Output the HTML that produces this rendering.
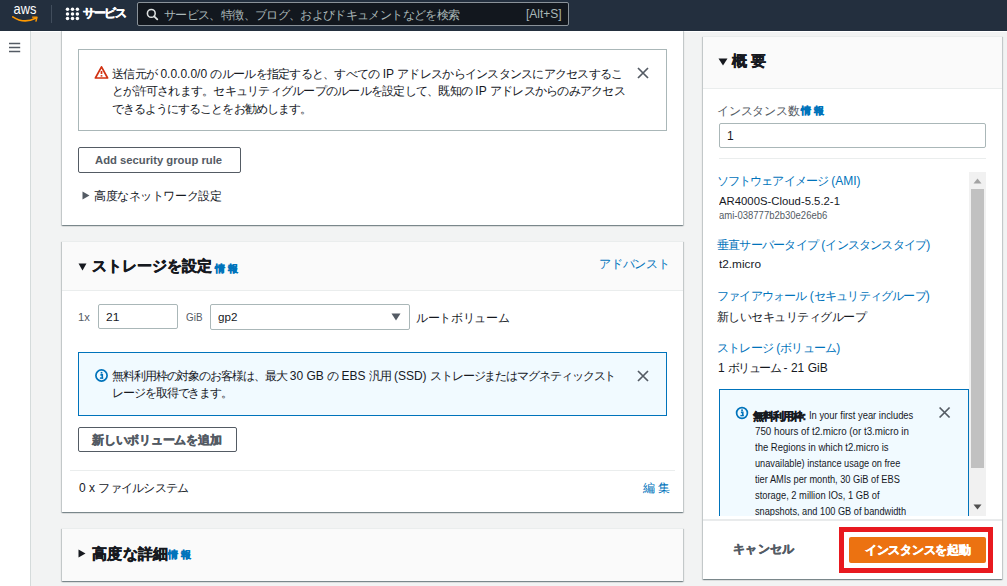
<!DOCTYPE html>
<html><head><meta charset="utf-8">
<style>
*{box-sizing:border-box;margin:0;padding:0}
html,body{width:1007px;height:586px;overflow:hidden;background:#f2f3f3;font-family:"Liberation Sans",sans-serif;color:#16191f;font-size:12px}
.a{position:absolute}
.t{position:absolute;white-space:nowrap}
.t i{display:inline-block;width:var(--w);text-align:center;font-style:normal}
.card{position:absolute;background:#fff;border-top:1px solid #eaeded;box-shadow:0 1px 1px 0 rgba(0,28,36,.3),1px 1px 1px 0 rgba(0,28,36,.15),-1px 1px 1px 0 rgba(0,28,36,.15)}
.hdr{position:absolute;background:#fafafa;border-bottom:1px solid #eaeded}
.btn{position:absolute;border:1px solid #545b64;background:#fff;border-radius:2px}
.inp{position:absolute;background:#fff;border:1px solid #aab7b8;border-radius:2px}
.alert{position:absolute;border:1px solid #aab7b8;background:#fff}
.ialert{position:absolute;border:1px solid #0073bb;background:#f1faff}
.line{position:absolute;height:1px;background:#eaeded}
svg{position:absolute}
</style></head><body>

<div class="a" style="left:0;top:31px;width:1007px;height:1px;background:#fff"></div>
<!-- sidebar -->
<div class="a" style="left:0;top:30px;width:31px;height:556px;background:#fff;border-right:1px solid #d5dbdb"></div>
<svg style="left:8px;top:41px" width="14" height="13" viewBox="0 0 14 13"><path d="M1 2.6 H12.2 M1 6.5 H12.2 M1 10.6 H12.2" stroke="#545b64" stroke-width="1.5"/></svg>

<!-- card 1 -->
<div class="card" style="left:62px;top:-10px;width:621px;height:235px"></div>
<div class="alert" style="left:78px;top:49px;width:589px;height:82px"></div>
<svg style="left:94px;top:65px" width="15" height="15" viewBox="0 0 15 15"><path d="M7.5 1.8 L13.6 13 L1.4 13 Z" stroke="#d13212" stroke-width="1.7" fill="none" stroke-linejoin="round"/><path d="M7.5 6 V9" stroke="#d13212" stroke-width="1.7"/><rect x="6.65" y="10.1" width="1.7" height="1.5" fill="#d13212"/></svg>
<svg style="left:636px;top:66px" width="14" height="14" viewBox="0 0 14 14"><path d="M2 2 L12 12 M12 2 L2 12" stroke="#545b64" stroke-width="1.7"/></svg>
<div class="btn" style="left:78px;top:147px;width:163px;height:26px"></div>
<svg style="left:82px;top:191px" width="8" height="9" viewBox="0 0 8 9"><path d="M0.5 0.5 L7.5 4.5 L0.5 8.5 Z" fill="#545b64"/></svg>

<!-- card 2 -->
<div class="card" style="left:62px;top:241px;width:621px;height:271px"></div>
<div class="hdr" style="left:62px;top:242px;width:621px;height:49px"></div>
<svg style="left:78px;top:263px" width="9" height="8" viewBox="0 0 9 8"><path d="M0.5 0.5 L8.5 0.5 L4.5 7.5 Z" fill="#16191f"/></svg>
<div class="inp" style="left:98px;top:304px;width:80px;height:25px"></div>
<div class="inp" style="left:210px;top:304px;width:200px;height:26px"></div>
<svg style="left:391px;top:313px" width="10" height="8" viewBox="0 0 10 8"><path d="M0.5 0.5 L9.5 0.5 L5 7.5 Z" fill="#545b64"/></svg>
<div class="ialert" style="left:78px;top:352px;width:589px;height:64px"></div>
<svg style="left:94px;top:368px" width="15" height="15" viewBox="0 0 15 15"><circle cx="7.5" cy="7.5" r="5.6" stroke="#0073bb" stroke-width="1.7" fill="none"/><path d="M6.4 6.9 H8.3 V10.4" stroke="#0073bb" stroke-width="1.6" fill="none"/><rect x="5.9" y="9.4" width="3.3" height="1.4" fill="#0073bb"/><rect x="6.7" y="3.9" width="1.7" height="1.7" fill="#0073bb"/></svg>
<svg style="left:636px;top:369px" width="14" height="14" viewBox="0 0 14 14"><path d="M2 2 L12 12 M12 2 L2 12" stroke="#545b64" stroke-width="1.7"/></svg>
<div class="btn" style="left:78px;top:427px;width:159px;height:25px"></div>
<div class="line" style="left:70px;top:470px;width:605px"></div>

<!-- card 3 -->
<div class="card" style="left:62px;top:528px;width:621px;height:53px;background:#fafafa"></div>
<svg style="left:78px;top:549px" width="8" height="9" viewBox="0 0 8 9"><path d="M0.5 0.5 L7.5 4.5 L0.5 8.5 Z" fill="#16191f"/></svg>

<!-- right panel -->
<div class="card" style="left:703px;top:36px;width:299px;height:543px"></div>
<div class="hdr" style="left:703px;top:37px;width:299px;height:52px"></div>
<svg style="left:718px;top:58px" width="10" height="8" viewBox="0 0 10 8"><path d="M0.5 0.5 L9.5 0.5 L5 7.5 Z" fill="#16191f"/></svg>
<div class="inp" style="left:719px;top:123px;width:267px;height:25px"></div>
<div class="line" style="left:719px;top:158px;width:267px"></div>

<div class="a" style="left:0;top:0;width:1007px;height:586px;clip-path:inset(159px 0 70px 0)">
<div class="ialert" style="left:719px;top:389px;width:250px;height:160px"></div>
<svg style="left:735px;top:406px" width="14" height="14" viewBox="0 0 14 14"><circle cx="7" cy="7" r="5.4" stroke="#0073bb" stroke-width="1.7" fill="none"/><path d="M5.9 6.4 H7.8 V9.9" stroke="#0073bb" stroke-width="1.6" fill="none"/><rect x="5.4" y="8.9" width="3.3" height="1.4" fill="#0073bb"/><rect x="6.2" y="3.4" width="1.7" height="1.7" fill="#0073bb"/></svg>
<svg style="left:937px;top:405px" width="14" height="14" viewBox="0 0 14 14"><path d="M2.6 2.5 L12.6 12.5 M12.6 2.5 L2.6 12.5" stroke="#545b64" stroke-width="1.7"/></svg>
<div class="t" style="left:753.00px;top:407.50px;font-size:11px;line-height:17px;font-weight:bold;-webkit-text-stroke:0.45px #16191f;color:#16191f;--w:9.89px"><i>無</i><i>料</i><i>利</i><i>用</i><i>枠</i>:</div>
<div class="t" style="left:809.07px;top:408.10px;font-size:10px;line-height:16px;color:#16191f;transform:scaleX(0.9380);transform-origin:0 0">In your first year includes</div>
<div class="t" style="left:754.99px;top:424.10px;font-size:10px;line-height:16px;color:#16191f;transform:scaleX(0.9753);transform-origin:0 0">750 hours of t2.micro (or t3.micro in</div>
<div class="t" style="left:754.96px;top:440.10px;font-size:10px;line-height:16px;color:#16191f;transform:scaleX(0.9501);transform-origin:0 0">the Regions in which t2.micro is</div>
<div class="t" style="left:754.95px;top:456.10px;font-size:10px;line-height:16px;color:#16191f;transform:scaleX(0.9207);transform-origin:0 0">unavailable) instance usage on free</div>
<div class="t" style="left:754.95px;top:472.10px;font-size:10px;line-height:16px;color:#16191f;transform:scaleX(0.9238);transform-origin:0 0">tier AMIs per month, 30 GiB of EBS</div>
<div class="t" style="left:754.95px;top:488.00px;font-size:10px;line-height:16px;color:#16191f;transform:scaleX(0.9336);transform-origin:0 0">storage, 2 million IOs, 1 GB of</div>
<div class="t" style="left:754.95px;top:504.00px;font-size:10px;line-height:16px;color:#16191f;transform:scaleX(0.9210);transform-origin:0 0">snapshots, and 100 GB of bandwidth</div>
</div>
<!-- scrollbar -->
<div class="a" style="left:969px;top:172px;width:17px;height:344px;background:#f1f1f1"></div>
<div class="a" style="left:971px;top:189px;width:13px;height:279px;background:#c1c1c1"></div>
<svg style="left:973px;top:178px" width="9" height="6" viewBox="0 0 9 6"><path d="M0.5 5.5 L8.5 5.5 L4.5 0.5 Z" fill="#a3a3a3"/></svg>
<svg style="left:973px;top:504px" width="9" height="6" viewBox="0 0 9 6"><path d="M0.5 0.5 L8.5 0.5 L4.5 5.5 Z" fill="#505050"/></svg>
<!-- footer -->
<div class="line" style="left:703px;top:519px;width:299px;height:2px;background:#e9ebec"></div>
<div class="a" style="left:839px;top:527px;width:154px;height:46px;border:5px solid #e8191f"></div>
<div class="a" style="left:849px;top:537px;width:137px;height:26px;background:#ec7211;border-radius:2px"></div>

<!-- nav -->
<div class="a" style="left:0;top:0;width:1007px;height:31px;background:#232f3e"></div>
<svg style="left:12px;top:4px" width="28" height="20" viewBox="0 0 28 20"><text x="1.6" y="9.9" font-family="Liberation Sans" font-size="14.8" fill="#fff" textLength="22.8" lengthAdjust="spacingAndGlyphs">aws</text><path d="M0.8 12.9 Q12 20.2 23.5 14.3" stroke="#f90" stroke-width="1.7" fill="none" stroke-linecap="round"/><path d="M20.6 13.1 L25 13.3 L24 17.1" stroke="#f90" stroke-width="1.4" fill="none" stroke-linecap="round" stroke-linejoin="round"/></svg>
<div class="a" style="left:51px;top:5px;width:1px;height:18px;background:#414d5c"></div>
<svg style="left:65px;top:7px" width="15" height="14" viewBox="0 0 15 14"><g fill="#fff"><circle cx="2.5" cy="2.3" r="1.75"/><circle cx="7.5" cy="2.3" r="1.75"/><circle cx="12.4" cy="2.3" r="1.75"/><circle cx="2.5" cy="6.9" r="1.75"/><circle cx="7.5" cy="6.9" r="1.75"/><circle cx="12.4" cy="6.9" r="1.75"/><circle cx="2.5" cy="11.5" r="1.75"/><circle cx="7.5" cy="11.5" r="1.75"/><circle cx="12.4" cy="11.5" r="1.75"/></g></svg>
<div class="a" style="left:137px;top:2px;width:432px;height:24px;background:#12171e;border:1px solid #8a9299;border-radius:2px"></div>
<svg style="left:146px;top:8px" width="13" height="13" viewBox="0 0 13 13"><circle cx="5.3" cy="5.4" r="3.9" stroke="#dfe3e3" stroke-width="1.55" fill="none"/><path d="M8.2 8.3 L11.3 11.4" stroke="#dfe3e3" stroke-width="1.8" stroke-linecap="round"/></svg>

<div class="t" style="left:83.00px;top:3.50px;font-size:12px;line-height:18px;font-weight:bold;-webkit-text-stroke:0.45px #fff;color:#fff;--w:10.70px"><i>サ</i><i>ー</i><i>ビ</i><i>ス</i></div>
<div class="t" style="left:164.00px;top:5.50px;font-size:12px;line-height:18px;color:#aab7b8;--w:11.37px"><i>サ</i><i>ー</i><i>ビ</i><i>ス</i><i>、</i><i>特</i><i>徴</i><i>、</i><i>ブ</i><i>ロ</i><i>グ</i><i>、</i><i>お</i><i>よ</i><i>び</i><i>ド</i><i>キ</i><i>ュ</i><i>メ</i><i>ン</i><i>ト</i><i>な</i><i>ど</i><i>を</i><i>検</i><i>索</i></div>
<div class="t" style="left:526.00px;top:4.50px;font-size:12px;line-height:18px;color:#aab7b8">[Alt+S]</div>
<div class="t" style="left:112.00px;top:64.50px;font-size:12px;line-height:18px;color:#16191f;--w:11.27px"><i>送</i><i>信</i><i>元</i><i>が</i> 0.0.0.0/0 <i>の</i><i>ル</i><i>ー</i><i>ル</i><i>を</i><i>指</i><i>定</i><i>す</i><i>る</i><i>と</i><i>、</i><i>す</i><i>べ</i><i>て</i><i>の</i> IP <i>ア</i><i>ド</i><i>レ</i><i>ス</i><i>か</i><i>ら</i><i>イ</i><i>ン</i><i>ス</i><i>タ</i><i>ン</i><i>ス</i><i>に</i><i>ア</i><i>ク</i><i>セ</i><i>ス</i><i>す</i><i>る</i><i>こ</i></div>
<div class="t" style="left:112.00px;top:81.50px;font-size:12px;line-height:18px;color:#16191f;--w:11.25px"><i>と</i><i>が</i><i>許</i><i>可</i><i>さ</i><i>れ</i><i>ま</i><i>す</i><i>。</i><i>セ</i><i>キ</i><i>ュ</i><i>リ</i><i>テ</i><i>ィ</i><i>グ</i><i>ル</i><i>ー</i><i>プ</i><i>の</i><i>ル</i><i>ー</i><i>ル</i><i>を</i><i>設</i><i>定</i><i>し</i><i>て</i><i>、</i><i>既</i><i>知</i><i>の</i> IP <i>ア</i><i>ド</i><i>レ</i><i>ス</i><i>か</i><i>ら</i><i>の</i><i>み</i><i>ア</i><i>ク</i><i>セ</i><i>ス</i></div>
<div class="t" style="left:112.00px;top:99.50px;font-size:12px;line-height:18px;color:#16191f;--w:11.05px"><i>で</i><i>き</i><i>る</i><i>よ</i><i>う</i><i>に</i><i>す</i><i>る</i><i>こ</i><i>と</i><i>を</i><i>お</i><i>勧</i><i>め</i><i>し</i><i>ま</i><i>す</i><i>。</i></div>
<div class="t" style="left:95.00px;top:151.50px;font-size:11px;line-height:17px;font-weight:bold;color:#545b64;transform:scaleX(1.0240);transform-origin:0 0">Add security group rule</div>
<div class="t" style="left:94.00px;top:186.50px;font-size:12px;line-height:18px;color:#16191f;--w:11.59px"><i>高</i><i>度</i><i>な</i><i>ネ</i><i>ッ</i><i>ト</i><i>ワ</i><i>ー</i><i>ク</i><i>設</i><i>定</i></div>
<div class="t" style="left:92.00px;top:255.00px;font-size:15px;line-height:21px;font-weight:bold;-webkit-text-stroke:0.45px #16191f;color:#16191f;--w:15.00px"><i>ス</i><i>ト</i><i>レ</i><i>ー</i><i>ジ</i><i>を</i><i>設</i><i>定</i></div>
<div class="t" style="left:214.00px;top:260.50px;font-size:10px;line-height:16px;font-weight:bold;-webkit-text-stroke:0.45px #0073bb;color:#0073bb;--w:12.50px"><i>情</i><i>報</i></div>
<div class="t" style="left:599.00px;top:254.50px;font-size:12px;line-height:18px;color:#0073bb;--w:11.80px"><i>ア</i><i>ド</i><i>バ</i><i>ン</i><i>ス</i><i>ト</i></div>
<div class="t" style="left:78.00px;top:308.50px;font-size:11px;line-height:17px;color:#545b64;transform:scaleX(1.0167);transform-origin:0 0">1x</div>
<div class="t" style="left:106.00px;top:308.50px;font-size:11px;line-height:17px;color:#16191f;transform:scaleX(1.0898);transform-origin:0 0">21</div>
<div class="t" style="left:185.93px;top:308.50px;font-size:11px;line-height:17px;color:#545b64;transform:scaleX(0.8989);transform-origin:0 0">GiB</div>
<div class="t" style="left:218.00px;top:308.50px;font-size:11px;line-height:17px;color:#16191f;transform:scaleX(1.0556);transform-origin:0 0">gp2</div>
<div class="t" style="left:416.00px;top:308.50px;font-size:12px;line-height:18px;color:#16191f;--w:11.70px"><i>ル</i><i>ー</i><i>ト</i><i>ボ</i><i>リ</i><i>ュ</i><i>ー</i><i>ム</i></div>
<div class="t" style="left:112.00px;top:366.50px;font-size:12px;line-height:18px;color:#16191f;--w:10.91px"><i>無</i><i>料</i><i>利</i><i>用</i><i>枠</i><i>の</i><i>対</i><i>象</i><i>の</i><i>お</i><i>客</i><i>様</i><i>は</i><i>、</i><i>最</i><i>大</i> 30 GB <i>の</i> EBS <i>汎</i><i>用</i> (SSD) <i>ス</i><i>ト</i><i>レ</i><i>ー</i><i>ジ</i><i>ま</i><i>た</i><i>は</i><i>マ</i><i>グ</i><i>ネ</i><i>テ</i><i>ィ</i><i>ッ</i><i>ク</i><i>ス</i><i>ト</i></div>
<div class="t" style="left:112.00px;top:383.50px;font-size:12px;line-height:18px;color:#16191f;--w:10.93px"><i>レ</i><i>ー</i><i>ジ</i><i>を</i><i>取</i><i>得</i><i>で</i><i>き</i><i>ま</i><i>す</i><i>。</i></div>
<div class="t" style="left:92.00px;top:430.50px;font-size:12px;line-height:18px;font-weight:bold;-webkit-text-stroke:0.45px #545b64;color:#545b64;--w:11.79px"><i>新</i><i>し</i><i>い</i><i>ボ</i><i>リ</i><i>ュ</i><i>ー</i><i>ム</i><i>を</i><i>追</i><i>加</i></div>
<div class="t" style="left:79.00px;top:478.50px;font-size:12px;line-height:18px;color:#16191f;--w:11.26px">0 x <i>フ</i><i>ァ</i><i>イ</i><i>ル</i><i>シ</i><i>ス</i><i>テ</i><i>ム</i></div>
<div class="t" style="left:642.00px;top:478.50px;font-size:12px;line-height:18px;color:#0073bb;--w:14.45px"><i>編</i><i>集</i></div>
<div class="t" style="left:92.00px;top:542.50px;font-size:15px;line-height:21px;font-weight:bold;-webkit-text-stroke:0.45px #16191f;color:#16191f;--w:15.29px"><i>高</i><i>度</i><i>な</i><i>詳</i><i>細</i></div>
<div class="t" style="left:167.00px;top:547.00px;font-size:10px;line-height:16px;font-weight:bold;-webkit-text-stroke:0.45px #0073bb;color:#0073bb;--w:12.50px"><i>情</i><i>報</i></div>
<div class="t" style="left:730.00px;top:50.00px;font-size:15px;line-height:21px;font-weight:bold;-webkit-text-stroke:0.45px #16191f;color:#16191f;--w:19.05px"><i>概</i><i>要</i></div>
<div class="t" style="left:717.00px;top:101.50px;font-size:12px;line-height:18px;color:#545b64;--w:11.77px"><i>イ</i><i>ン</i><i>ス</i><i>タ</i><i>ン</i><i>ス</i><i>数</i></div>
<div class="t" style="left:800.00px;top:102.50px;font-size:10px;line-height:16px;font-weight:bold;-webkit-text-stroke:0.45px #0073bb;color:#0073bb;--w:12.50px"><i>情</i><i>報</i></div>
<div class="t" style="left:727.00px;top:126.50px;font-size:12px;line-height:18px;color:#16191f">1</div>
<div class="t" style="left:717.00px;top:171.50px;font-size:12px;line-height:18px;color:#0073bb;--w:11.10px"><i>ソ</i><i>フ</i><i>ト</i><i>ウ</i><i>ェ</i><i>ア</i><i>イ</i><i>メ</i><i>ー</i><i>ジ</i> (AMI)</div>
<div class="t" style="left:719.00px;top:192.50px;font-size:11px;line-height:17px;color:#16191f;transform:scaleX(1.0301);transform-origin:0 0">AR4000S-Cloud-5.5.2-1</div>
<div class="t" style="left:719.00px;top:207.50px;font-size:10px;line-height:16px;color:#545b64;transform:scaleX(0.9500);transform-origin:0 0">ami-038777b2b30e26eb6</div>
<div class="t" style="left:717.00px;top:235.50px;font-size:12px;line-height:18px;color:#0073bb;--w:11.23px"><i>垂</i><i>直</i><i>サ</i><i>ー</i><i>バ</i><i>ー</i><i>タ</i><i>イ</i><i>プ</i> (<i>イ</i><i>ン</i><i>ス</i><i>タ</i><i>ン</i><i>ス</i><i>タ</i><i>イ</i><i>プ</i>)</div>
<div class="t" style="left:719.00px;top:255.50px;font-size:11px;line-height:17px;color:#16191f;transform:scaleX(1.0726);transform-origin:0 0">t2.micro</div>
<div class="t" style="left:717.00px;top:286.50px;font-size:12px;line-height:18px;color:#0073bb;--w:11.20px"><i>フ</i><i>ァ</i><i>イ</i><i>ア</i><i>ウ</i><i>ォ</i><i>ー</i><i>ル</i> (<i>セ</i><i>キ</i><i>ュ</i><i>リ</i><i>テ</i><i>ィ</i><i>グ</i><i>ル</i><i>ー</i><i>プ</i>)</div>
<div class="t" style="left:717.00px;top:307.50px;font-size:12px;line-height:18px;color:#16191f;--w:11.47px"><i>新</i><i>し</i><i>い</i><i>セ</i><i>キ</i><i>ュ</i><i>リ</i><i>テ</i><i>ィ</i><i>グ</i><i>ル</i><i>ー</i><i>プ</i></div>
<div class="t" style="left:717.00px;top:338.50px;font-size:12px;line-height:18px;color:#0073bb;--w:11.20px"><i>ス</i><i>ト</i><i>レ</i><i>ー</i><i>ジ</i> (<i>ボ</i><i>リ</i><i>ュ</i><i>ー</i><i>ム</i>)</div>
<div class="t" style="left:718.00px;top:358.50px;font-size:12px;line-height:18px;color:#16191f;--w:10.46px">1 <i>ボ</i><i>リ</i><i>ュ</i><i>ー</i><i>ム</i> - 21 GiB</div>
<div class="t" style="left:733.00px;top:540.00px;font-size:12px;line-height:18px;font-weight:bold;-webkit-text-stroke:0.45px #545b64;color:#545b64;--w:12.30px"><i>キ</i><i>ャ</i><i>ン</i><i>セ</i><i>ル</i></div>
<div class="t" style="left:865.00px;top:540.50px;font-size:12px;line-height:18px;font-weight:bold;-webkit-text-stroke:0.45px #fff;color:#fff;--w:11.72px"><i>イ</i><i>ン</i><i>ス</i><i>タ</i><i>ン</i><i>ス</i><i>を</i><i>起</i><i>動</i></div>
</body></html>
